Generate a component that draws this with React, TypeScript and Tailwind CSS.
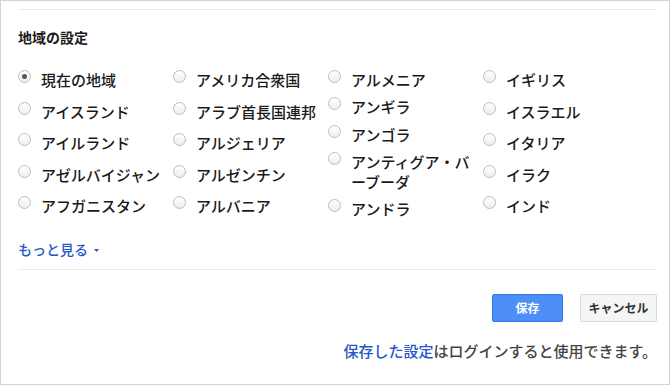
import React from "react";

type Option = { label: React.ReactNode; checked?: boolean };

const columns: { items: Option[]; gap: string }[] = [
  {
    gap: "gap-[11.5px]",
    items: [
      { label: "現在の地域", checked: true },
      { label: "アイスランド" },
      { label: "アイルランド" },
      { label: "アゼルバイジャン" },
      { label: "アフガニスタン" },
    ],
  },
  {
    gap: "gap-[11.5px]",
    items: [
      { label: "アメリカ合衆国" },
      { label: "アラブ首長国連邦" },
      { label: "アルジェリア" },
      { label: "アルゼンチン" },
      { label: "アルバニア" },
    ],
  },
  {
    gap: "gap-[7.25px]",
    items: [
      { label: "アルメニア" },
      { label: "アンギラ" },
      { label: "アンゴラ" },
      {
        label: (
          <>
            アンティグア・バ
            <br />
            ーブーダ
          </>
        ),
      },
      { label: "アンドラ" },
    ],
  },
  {
    gap: "gap-[11.5px]",
    items: [
      { label: "イギリス" },
      { label: "イスラエル" },
      { label: "イタリア" },
      { label: "イラク" },
      { label: "インド" },
    ],
  },
];

function Radio({ checked }: { checked?: boolean }) {
  return (
    <span className="flex h-[13px] w-[13px] shrink-0 items-center justify-center rounded-full border border-[#bdbdbd] bg-gradient-to-b from-white to-[#eeeeee]">
      {checked && <span className="h-[5px] w-[5px] rounded-full bg-[#555]" />}
    </span>
  );
}

export default function App() {
  return (
    <div className="h-[385px] w-[670px] border border-[#d4d4d4] bg-white pl-[17px] pr-[12px] font-['Noto_Sans_CJK_JP',sans-serif] text-[#1a1a1a]">
      <div className="mt-[8px] h-px bg-[#ebebeb]" />

      <h2 className="mt-[17px] text-[14px] font-bold leading-[20px]">地域の設定</h2>

      {/* region list */}
      <div className="mt-[23px] flex">
        {columns.map((col, i) => (
          <div key={i} className={`flex w-[155px] flex-col ${col.gap}`}>
            {col.items.map((opt, j) => (
              <label key={j} className="flex items-start gap-[10px]">
                <Radio checked={opt.checked} />
                <span className="text-[15px] font-medium leading-[20px]">{opt.label}</span>
              </label>
            ))}
          </div>
        ))}
      </div>

      <a className="mt-[19.5px] flex items-center text-[14px] font-medium leading-[20px] text-[#2557c7]">
        もっと見る
        <svg className="ml-[6px] mt-[3px]" width="5" height="3" viewBox="0 0 5 3">
          <polygon points="0,0 5,0 2.5,3" fill="#2557c7" />
        </svg>
      </a>

      <div className="mt-[10.5px] h-px bg-[#ebebeb]" />

      <div className="mt-[24px] flex justify-end gap-[17px]">
        <button className="h-[28px] w-[71px] rounded-[2px] border border-[#3079ed] bg-[#4d8ff6] text-[12px] font-bold text-white">
          保存
        </button>
        <button className="h-[28px] w-[77px] rounded-[2px] border border-[#d9d9d9] bg-[#f5f5f5] text-[12px] font-bold text-[#333]">
          キャンセル
        </button>
      </div>

      <p className="mt-[19px] text-right text-[15px] font-medium leading-[20px] text-[#444]">
        <a className="text-[#2557c7]">保存した設定</a>はログインすると使用できます。
      </p>
    </div>
  );
}
